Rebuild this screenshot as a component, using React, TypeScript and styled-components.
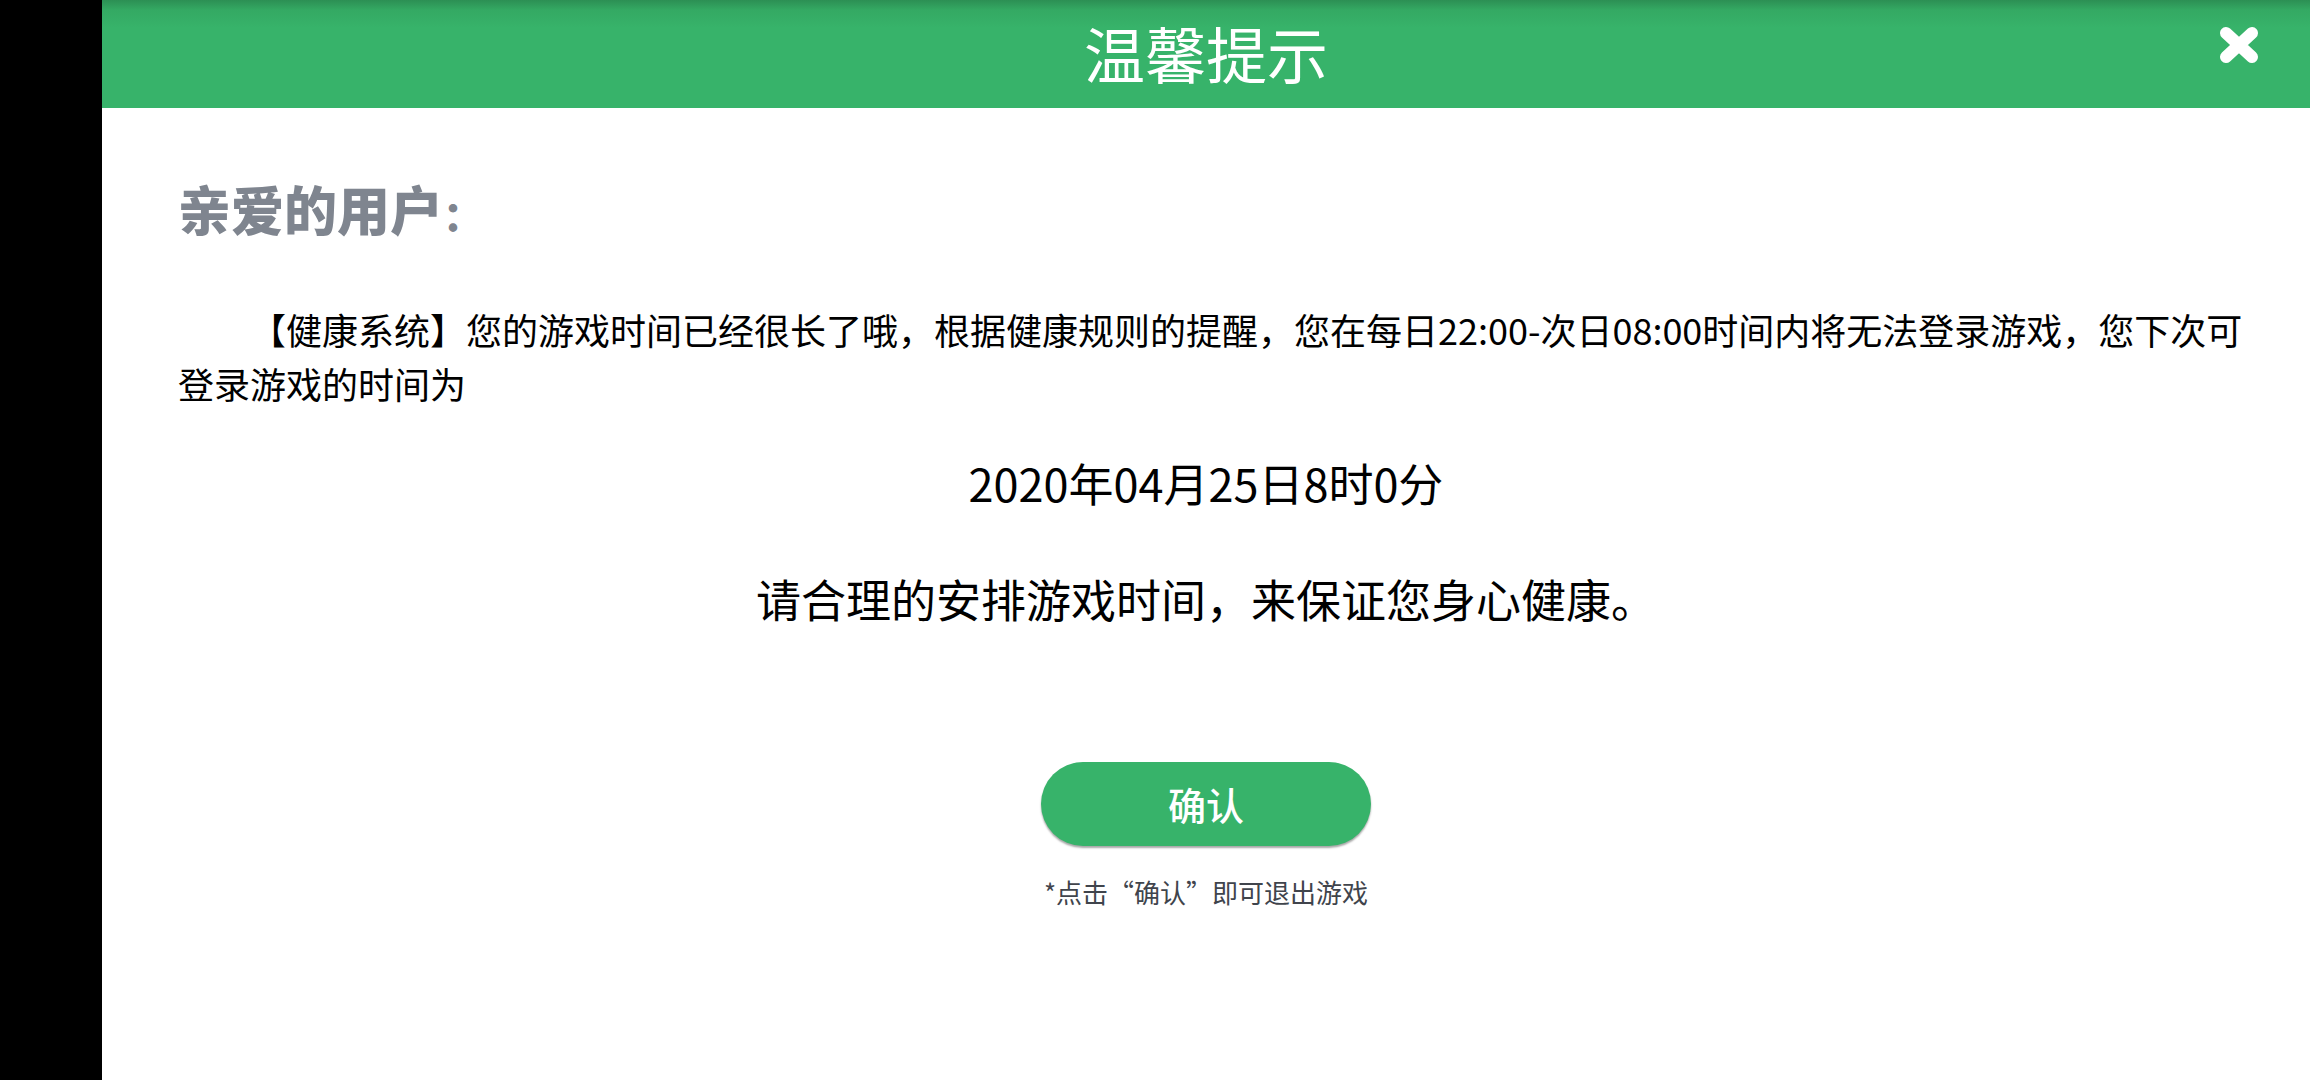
import React from "react";
import styled, { createGlobalStyle } from "styled-components";

const Global = createGlobalStyle`
  * { box-sizing: border-box; }
  html, body { margin: 0; background: #fff; }
  body { font-family: "Noto Sans CJK SC", sans-serif; color: #000; }
  h1, h2, p { margin: 0; font-weight: 400; }
  button { font-family: inherit; }
`;

const Screen = styled.div`
  display: flex;
  min-height: 100vh;
`;

const Notch = styled.div`
  flex: 0 0 102px;
  background: #000;
`;

const Dialog = styled.main`
  flex: 1;
  min-width: 0;
  display: flex;
  flex-direction: column;
  background: #fff;
`;

const Header = styled.header`
  display: grid;
  grid-template-columns: 80px 1fr 80px;
  height: 108px;
  padding: 0 32px;
  color: #fff;
  background: linear-gradient(#2c8f54 0, #34a963 10px, #37b36a 28px);
`;

const Title = styled.h1`
  grid-column: 2;
  text-align: center;
  font-size: 61px;
  line-height: 106px;
`;

const CloseButton = styled.button`
  justify-self: end;
  align-self: start;
  display: flex;
  margin: 24px 18px 0 0;
  padding: 0;
  border: 0;
  background: none;
  color: inherit;
  cursor: pointer;
`;

const Content = styled.section`
  display: flex;
  flex-direction: column;
  align-items: center;
  padding: 64px;
`;

const Greeting = styled.h2`
  align-self: stretch;
  padding-left: 12px;
  font-size: 53px;
  font-weight: 900;
  line-height: 72px;
  color: #7f858f;
`;

const Colon = styled.span`
  font-size: 40px;
  line-height: 1;
`;

const Notice = styled.p`
  align-self: stretch;
  margin-top: 58px;
  padding-left: 12px;
  text-indent: 2em;
  font-size: 36px;
  line-height: 54px;
`;

const Highlight = styled.p`
  margin-top: 41px;
  font-size: 45px;
  line-height: 64px;
  text-align: center;

  & + & {
    margin-top: 52px;
  }
`;

const ConfirmButton = styled.button`
  width: 330px;
  height: 84px;
  margin-top: 131px;
  padding: 0 0 2px;
  border: 0;
  border-radius: 42px;
  background: #37b36a;
  box-shadow: 0 2px 2px rgba(0, 0, 0, 0.35);
  color: #fff;
  font-size: 38px;
  font-weight: 500;
  cursor: pointer;
`;

const Hint = styled.p`
  margin-top: 26px;
  font-size: 26px;
  line-height: 40px;
  color: #40444c;
`;

export default function App() {
  return (
    <Screen lang="zh-CN">
      <Global />
      <Notch />
      <Dialog>
        <Header>
          <Title>温馨提示</Title>
          <CloseButton aria-label="关闭">
            <svg width="42" height="42" viewBox="0 0 42 42" fill="none" stroke="currentColor" strokeWidth="12" strokeLinecap="round">
              <path d="M8 9 L34 33 M34 9 L8 33" />
            </svg>
          </CloseButton>
        </Header>
        <Content>
          <Greeting>亲爱的用户<Colon>：</Colon></Greeting>
          <Notice>
            【健康系统】您的游戏时间已经很长了哦，根据健康规则的提醒，您在每日22:00-次日08:00时间内将无法登录游戏，您下次可登录游戏的时间为
          </Notice>
          <Highlight>2020年04月25日8时0分</Highlight>
          <Highlight>请合理的安排游戏时间，来保证您身心健康。</Highlight>
          <ConfirmButton>确认</ConfirmButton>
          <Hint>*点击“确认”即可退出游戏</Hint>
        </Content>
      </Dialog>
    </Screen>
  );
}
